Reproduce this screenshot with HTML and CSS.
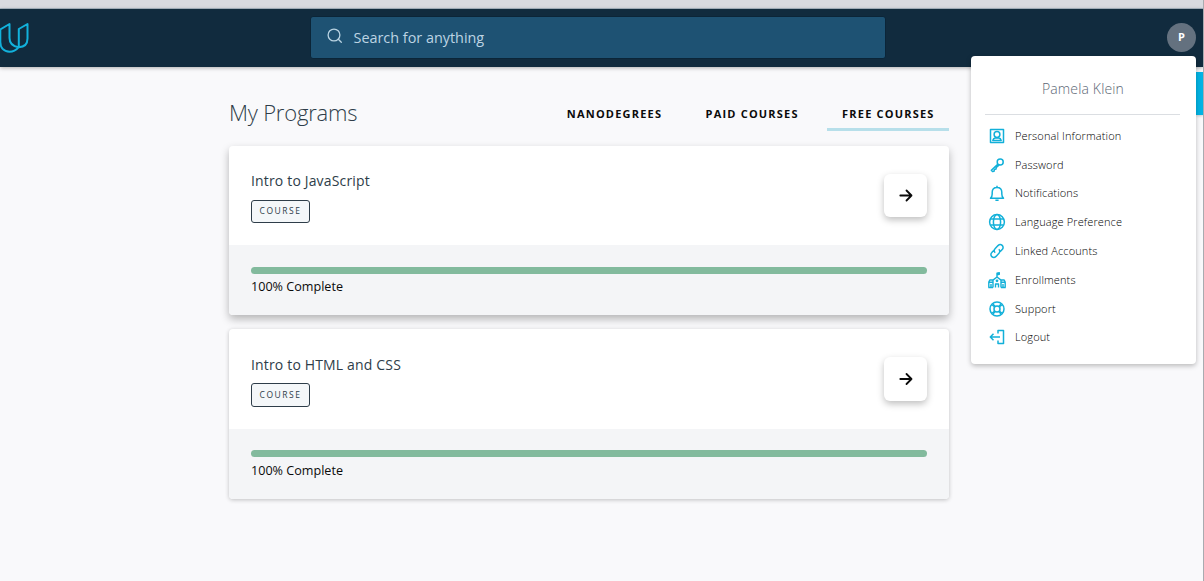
FILE: index.html
```
<!DOCTYPE html>
<html lang="en">
<head>
<meta charset="utf-8">
<title>My Programs</title>
<link rel="stylesheet" href="styles.css">
</head>
<body>
<div class="window-edge"></div>
<header class="topbar">
  <svg class="logo" viewBox="0 0 30 32" fill="none" stroke="#12b1dc" stroke-width="2" stroke-linejoin="round"><path d="M.3 7.500 9.500 2v14c0 5 3.500 8.300 9 9.300C16 28.300 13 29.700 9.500 29.700 3.500 29.700.3 25.500.3 20zM18.800 25.200V7L27.500 2v14.500c0 5.500-3.500 8.500-8.700 8.700z"/></svg>
  <div class="search">
    <svg class="search-icon" viewBox="0 0 16 16" fill="none" stroke="#b9d3e2" stroke-width="1.300" stroke-linecap="round"><circle cx="7" cy="7" r="5.900"/><path d="m11.300 11.300 3 3"/></svg>
    <span class="search-text">Search for anything</span>
  </div>
  <div class="avatar">P</div>
</header>

<main class="content">
  <div class="heading">
    <h1 class="title">My Programs</h1>
    <nav class="tabs">
      <a class="tab">NANODEGREES</a>
      <a class="tab">PAID COURSES</a>
      <a class="tab active">FREE COURSES</a>
    </nav>
  </div>
  <section class="card raised">
    <div class="card-main">
      <div>
        <h2 class="course-name">Intro to JavaScript</h2>
        <span class="badge">COURSE</span>
      </div>
      <div class="go"><svg class="arrow" viewBox="0 0 14 14" fill="none" stroke="#0b0b0b" stroke-width="1.800" stroke-linecap="round" stroke-linejoin="round"><path d="M1.300 6.500h11.200M7.500 1.500l5 5-5 5"/></svg></div>
    </div>
    <div class="card-foot"><div class="progress"></div><div class="complete">100% Complete</div></div>
  </section>
  <section class="card">
    <div class="card-main">
      <div>
        <h2 class="course-name">Intro to HTML and CSS</h2>
        <span class="badge">COURSE</span>
      </div>
      <div class="go"><svg class="arrow" viewBox="0 0 14 14" fill="none" stroke="#0b0b0b" stroke-width="1.800" stroke-linecap="round" stroke-linejoin="round"><path d="M1.300 7h11.200M7.500 2l5 5-5 5"/></svg></div>
    </div>
    <div class="card-foot"><div class="progress"></div><div class="complete">100% Complete</div></div>
  </section>
</main>

<div class="side-tab"></div>
<aside class="menu">
  <div class="user">Pamela Klein</div>
  <ul class="items">
    <li class="item"><svg class="icon" viewBox="0 0 18 18"><path d="M2.500 2.500h13v13h-13z"/><circle cx="9" cy="7.500" r="2.900"/><path d="M4.800 13.500c.4-1.700 1.300-2.300 2.700-2.400h3c1.400.1 2.300.7 2.700 2.400z"/></svg>Personal Information</li>
    <li class="item"><svg class="icon" viewBox="0 0 18 18"><circle cx="12.200" cy="6" r="3"/><path d="m10 8.100-6.700 6.200 1.200 1.200 1.600-.3.300-1.700 1.600-.4.300-1.600 2.900-2.600"/></svg>Password</li>
    <li class="item"><svg class="icon" viewBox="0 0 18 18"><path d="M2.500 14.300h13c-1.300-1.300-1.700-2.300-1.700-4.300V8.300c0-2.900-2-4.900-4.800-4.900S4.200 5.400 4.200 8.300V10c0 2-.4 3-1.700 4.300zM9 1.800v1.600M7.400 16.300h3.200"/></svg>Notifications</li>
    <li class="item"><svg class="icon" viewBox="0 0 18 18"><circle cx="9" cy="9" r="7.400"/><ellipse cx="9" cy="9" rx="3.600" ry="7.400"/><path d="M2.500 6h13M2.500 12h13"/></svg>Language Preference</li>
    <li class="item"><svg class="icon" viewBox="0 0 18 18"><path d="M7.200 10.800c-1.300-1.200-1.300-2.900-.2-4l3-3.200c1.300-1.300 3-1.300 4.200-.2s1.200 2.900 0 4.100l-1.900 2M10.800 7.200c1.300 1.200 1.300 2.900.2 4l-3 3.200c-1.300 1.300-3 1.300-4.200.2s-1.200-2.900 0-4.100l1.900-2"/></svg>Linked Accounts</li>
    <li class="item"><svg class="icon icon-school" viewBox="0 0 18 18"><path d="M.8 16.500V11l1-2h3M17.200 16.500V11l-1-2h-3M.8 11.200h4M13.200 11.200h4M4.300 9.600 9 6l4.700 3.600M5 9.500v7M13 9.500v7M7.500 16.500V13h3v3.500M9 6V2.200l2.300-.5v1.600L9 3.800M3 13v3.500M15 13v3.500M.3 16.500h4.700M13 16.500h4.700"/><circle cx="9" cy="9.800" r=".7"/></svg>Enrollments</li>
    <li class="item"><svg class="icon" viewBox="0 0 18 18"><circle cx="9" cy="9" r="7"/><circle cx="9" cy="9" r="3"/><path d="m4.200 4.800 2.600 2m4.400 4.400 2.600 2m0-8.400-2.600 2m-4.400 4.400-2.600 2M5 4l2 2.500m4 5 2 2.500M13 4l-2 2.500m-4 5L5 14"/></svg>Support</li>
    <li class="item"><svg class="icon" viewBox="0 0 18 18"><path d="M2.500 9H12M5.500 5.800 2.300 9l3.200 3.200M10 5.500v-3h5.500v13H10v-3"/></svg>Logout</li>
  </ul>
</aside>
</body>
</html>
```
FILE: styles.css
```
* { box-sizing: border-box; }
body {
  margin: 0;
  height: 581px;
  overflow: hidden;
  position: relative;
  background: #f9f9fb;
  border-right: 1px solid #a9abb0;
  font-family: "Open Sans", sans-serif;
  color: #0b0b0b;
}
.window-edge { height: 9px; background: #d8dae0; border-bottom: 1px solid #a9b7c4; }
.topbar {
  height: 58px;
  display: flex;
  align-items: flex-start;
  background: #112b3e;
  box-shadow: 0 1px 4px rgba(0, 0, 0, .3);
}
.logo { width: 30px; height: 32px; margin-top: 13px; flex: none; }
.search {
  width: 576px;
  height: 43px;
  margin: 7px 0 0 280px;
  padding-left: 16px;
  display: flex;
  align-items: center;
  background: #1e5273;
  border: 1px solid #0b2538;
  border-radius: 3px;
}
.search-icon { width: 16px; height: 16px; margin-top: -3px; }
.search-text { margin-left: 10.5px; font-size: 14.4px; color: #bdd4e3; white-space: nowrap; }
.avatar {
  width: 29px;
  height: 29px;
  margin: 14px 7px 0 auto;
  border-radius: 50%;
  background: #64717f;
  color: #fff;
  font-size: 11px;
  font-weight: 700;
  line-height: 28px;
  text-align: center;
}
.content { width: 720px; margin-left: 229px; padding-top: 31px; }
.heading { height: 48px; display: flex; justify-content: space-between; }
.title { margin: 0; font-size: 22px; font-weight: 300; line-height: 29px; letter-spacing: -.2px; color: #2e3d49; white-space: nowrap; }
.tabs { display: flex; gap: 14px; height: 33px; }
.tab {
  padding: 8px 14.4px 0 15px;
  font-size: 11px;
  font-weight: 700;
  line-height: 16px;
  letter-spacing: 1.2px;
  white-space: nowrap;
}
.active { border-bottom: 3px solid #b7dfea; }
.card {
  height: 170px;
  margin-bottom: 14px;
  border-radius: 4px;
  background: #fff;
  box-shadow: 0 1px 4px rgba(0, 0, 0, .23);
}
.card-main { height: 100px; padding: 26px 22px 0; display: flex; justify-content: space-between; }
.raised { height: 169px; box-shadow: 0 4px 9px rgba(0, 0, 0, .28); }
.raised .card-main { height: 99px; padding-top: 25px; }
.course-name { margin: 0 0 8px; font-size: 14px; font-weight: 400; line-height: 20px; letter-spacing: .16px; color: #2e3d49; white-space: nowrap; }
.raised .course-name { margin-bottom: 9px; }
.badge {
  display: block;
  width: 59px;
  height: 24px;
  border: 1px solid #2e3d49;
  border-radius: 3px;
  background: #f4f7f9;
  font-size: 8.5px;
  line-height: 22px;
  letter-spacing: 1.5px;
  text-align: center;
  color: #2e3d49;
}
.raised .badge { height: 23px; line-height: 20px; }
.go {
  width: 43px;
  height: 44px;
  margin-top: 2px;
  display: flex;
  align-items: center;
  justify-content: center;
  border-radius: 6px;
  background: #fff;
  box-shadow: 0 3px 7px rgba(0, 0, 0, .25);
}
.raised .go { height: 43px; margin-top: 3px; }
.arrow { width: 14px; height: 14px; }
.card-foot { height: 70px; padding: 21px 22px 0; background: #f4f5f7; border-radius: 0 0 4px 4px; }
.raised .card-foot { padding-top: 22px; }
.progress { height: 7px; border-radius: 4px; background: #82ba9d; }
.complete { margin-top: 5px; font-size: 12.6px; font-weight: 400; line-height: 18px; }
.raised .complete { margin-top: 4px; }
.side-tab { position: absolute; right: 0; top: 72px; width: 7px; height: 43px; background: #02b3e4; box-shadow: 0 1px 3px rgba(0, 0, 0, .2); }
.menu {
  position: absolute;
  left: 971px;
  top: 56px;
  width: 225px;
  height: 308px;
  padding: 0 16px 0 14px;
  border-radius: 4px;
  background: #fff;
  box-shadow: 0 2px 5px rgba(0, 0, 0, .25);
}
.user { height: 59px; padding: 23px 0 0 1px; border-bottom: 1px solid #dbdee2; font-size: 14px; font-weight: 300; line-height: 20px; letter-spacing: .15px; text-align: center; color: #5d6875; }
.items { margin: 0; padding: 6.5px 0 0 3px; list-style: none; }
.item { height: 28.8px; display: flex; align-items: center; gap: 9px; font-size: 11px; font-weight: 300; line-height: 14px; letter-spacing: .12px; color: #000; white-space: nowrap; }
.icon { width: 18px; height: 18px; fill: none; stroke: #12b0d9; stroke-width: 1.5; stroke-linejoin: round; }
.icon-school { stroke-width: 1.4; }
```
